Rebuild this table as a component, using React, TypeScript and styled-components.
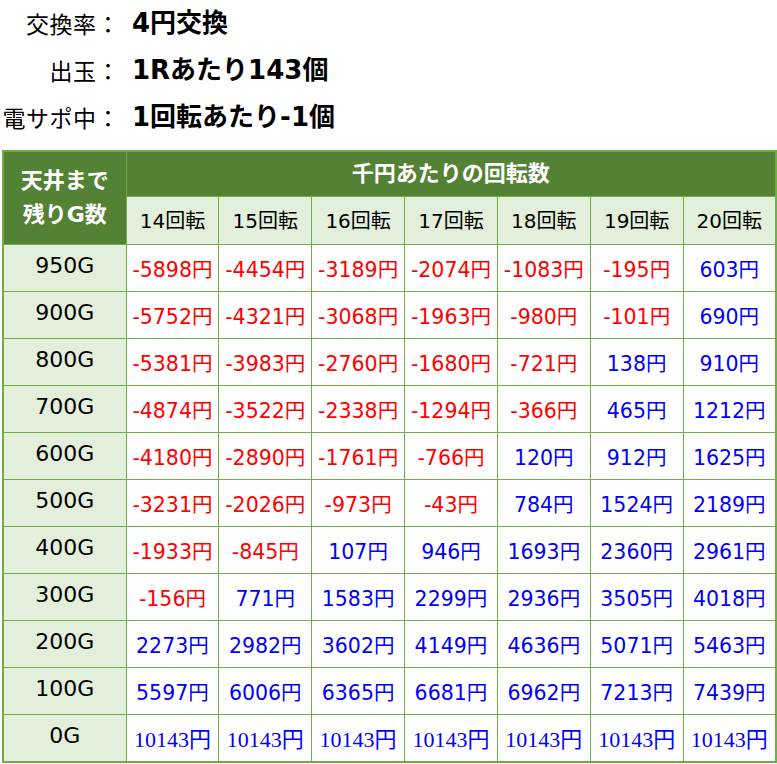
import React from 'react';
import styled, { createGlobalStyle } from 'styled-components';

const GlobalStyle = createGlobalStyle`
  body {
    margin: 0;
    background: #ffffff;
    font-family: "DejaVu Sans", "Noto Sans CJK JP", sans-serif;
    color: #000000;
  }
`;

const Page = styled.div`
  width: 777px;
`;

const InfoList = styled.dl`
  margin: 0;
  padding: 0;
  display: grid;
  grid-template-columns: 124px 1fr;
  grid-auto-rows: 47px;
  align-items: center;
`;

const InfoLabel = styled.dt`
  margin: 0;
  text-align: right;
  font-family: "Noto Sans CJK JP", sans-serif;
  font-size: 23px;
  line-height: 1.2;
  padding-right: 4px;
  white-space: nowrap;
  letter-spacing: 0.5px;
`;

const InfoValue = styled.dd`
  margin: 0;
  padding-left: 8px;
  font-size: 26px;
  line-height: 1.2;
  font-weight: bold;
  white-space: nowrap;
`;

const Table = styled.table`
  margin: 9px 0 0 2px;
  width: 775px;
  border-collapse: collapse;
  table-layout: fixed;
  border: 2px solid #70ad47;
`;

const HeadCell = styled.th<{ $dark?: boolean }>`
  border: 1px solid #70ad47;
  background: ${(p) => (p.$dark ? '#548235' : '#e2efda')};
  color: ${(p) => (p.$dark ? '#ffffff' : '#000000')};
  font-weight: ${(p) => (p.$dark ? 'bold' : 'normal')};
  font-size: ${(p) => (p.$dark ? '22px' : '20px')};
  height: ${(p) => (p.$dark ? '44px' : '47px')};
  padding: 0;
  text-align: center;
  line-height: 1.2;
  white-space: nowrap;
`;

const StackedTitle = styled.span`
  display: block;
  line-height: 34px;
  font-size: 22px;
`;

const RowLabel = styled.th`
  border: 1px solid #70ad47;
  background: #e2efda;
  font-weight: normal;
  font-size: 22px;
  line-height: 1.2;
  height: 42px;
  padding: 0 0 4px;
  text-align: center;
`;

const Cell = styled.td<{ $neg: boolean; $serif?: boolean }>`
  border: 1px solid #70ad47;
  background: #ffffff;
  color: ${(p) => (p.$neg ? '#ff0000' : '#0000ff')};
  font-family: ${(p) =>
    p.$serif
      ? '"Liberation Serif", "Noto Sans CJK JP", serif'
      : '"DejaVu Sans", "Noto Sans CJK JP", sans-serif'};
  font-size: ${(p) => (p.$serif ? '22px' : '20.5px')};
  line-height: 1.2;
  height: 42px;
  text-align: center;
  padding: 4px 0 0;
  white-space: nowrap;
`;

const spins = [14, 15, 16, 17, 18, 19, 20];

const rows: Array<[string, number[]]> = [
  ['950G', [-5898, -4454, -3189, -2074, -1083, -195, 603]],
  ['900G', [-5752, -4321, -3068, -1963, -980, -101, 690]],
  ['800G', [-5381, -3983, -2760, -1680, -721, 138, 910]],
  ['700G', [-4874, -3522, -2338, -1294, -366, 465, 1212]],
  ['600G', [-4180, -2890, -1761, -766, 120, 912, 1625]],
  ['500G', [-3231, -2026, -973, -43, 784, 1524, 2189]],
  ['400G', [-1933, -845, 107, 946, 1693, 2360, 2961]],
  ['300G', [-156, 771, 1583, 2299, 2936, 3505, 4018]],
  ['200G', [2273, 2982, 3602, 4149, 4636, 5071, 5463]],
  ['100G', [5597, 6006, 6365, 6681, 6962, 7213, 7439]],
  ['0G', [10143, 10143, 10143, 10143, 10143, 10143, 10143]],
];

export default function App() {
  return (
    <Page>
      <GlobalStyle />
      <InfoList>
        <InfoLabel>交換率：</InfoLabel>
        <InfoValue>4円交換</InfoValue>
        <InfoLabel>出玉：</InfoLabel>
        <InfoValue>1Rあたり143個</InfoValue>
        <InfoLabel>電サポ中：</InfoLabel>
        <InfoValue>1回転あたり-1個</InfoValue>
      </InfoList>
      <Table>
        <colgroup>
          <col style={{ width: 123 }} />
          {spins.map((s) => (
            <col key={s} />
          ))}
        </colgroup>
        <thead>
          <tr>
            <HeadCell $dark rowSpan={2}>
              <StackedTitle>天井まで</StackedTitle>
              <StackedTitle>残りG数</StackedTitle>
            </HeadCell>
            <HeadCell $dark colSpan={7}>
              千円あたりの回転数
            </HeadCell>
          </tr>
          <tr>
            {spins.map((s) => (
              <HeadCell key={s}>{s}回転</HeadCell>
            ))}
          </tr>
        </thead>
        <tbody>
          {rows.map(([label, values]) => (
            <tr key={label}>
              <RowLabel>{label}</RowLabel>
              {values.map((v, i) => (
                <Cell key={i} $neg={v < 0} $serif={label === '0G'}>
                  {v}円
                </Cell>
              ))}
            </tr>
          ))}
        </tbody>
      </Table>
    </Page>
  );
}
